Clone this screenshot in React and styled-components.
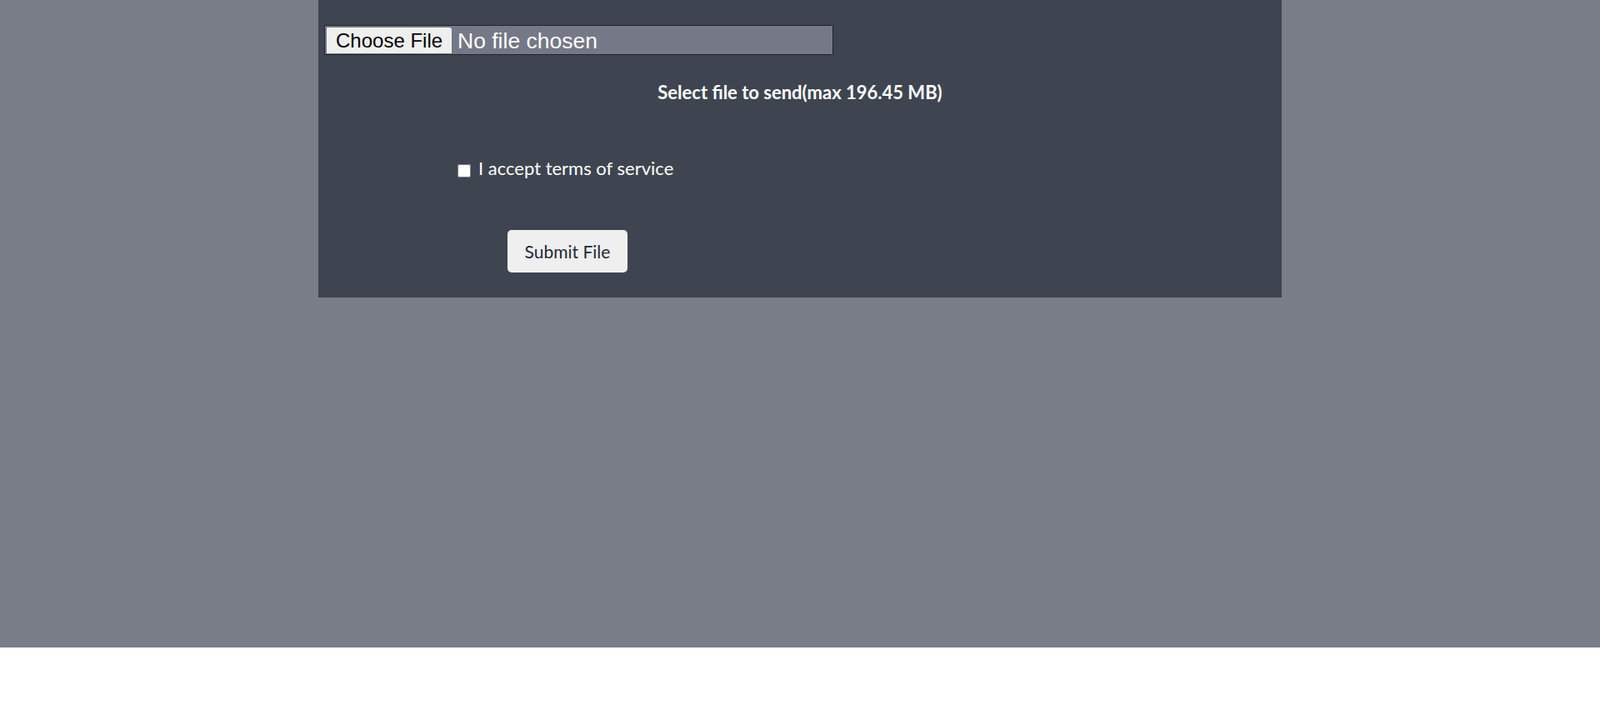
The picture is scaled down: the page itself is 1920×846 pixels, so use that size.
import React from 'react'
import styled, { createGlobalStyle } from 'styled-components'

const GlobalStyle = createGlobalStyle`
  body {
    margin: 0;
    background: #ffffff;
    font-family: Lato, "Noto Sans", sans-serif;
  }
`

const Page = styled.div`
  background-color: #797d88;
  height: 777px;
  display: flex;
  justify-content: center;
`

const Panel = styled.form`
  width: 1156px;
  height: 357px;
  box-sizing: border-box;
  background-color: #3e4550;
  padding: 30px 7px 0;
  display: flex;
  flex-direction: column;
`

const FileInput = styled.input`
  width: 611px;
  height: 36px;
  box-sizing: border-box;
  margin: 0;
  padding: 2px 2px 1px;
  background-color: #757886;
  border: 1px solid #1f232a;
  color: #ffffff;
  font-family: "Liberation Sans", Arial, sans-serif;
  font-size: 26.5px;
  line-height: 32px;
  &::file-selector-button {
    height: 31px;
    width: 150px;
    margin: 0 7px 0 0;
    padding: 0 11px;
    border: none;
    border-radius: 0 3px 0 0;
    background-color: #efefef;
    color: #000000;
    font-family: "Liberation Sans", Arial, sans-serif;
    font-size: 24px;
    vertical-align: top;
  }
`

const Title = styled.h3`
  margin: 32px 0 0;
  text-align: center;
  color: #ffffff;
  font-size: 22px;
  font-weight: 700;
  line-height: 26px;
`

const TermsRow = styled.label`
  margin: 66px 0 0 160px;
  align-self: flex-start;
  display: flex;
  align-items: center;
  gap: 9px;
  color: #ffffff;
  font-size: 22px;
  line-height: 24px;
`

const Check = styled.input`
  width: 16px;
  height: 16px;
  margin: 5px 0 0;
`

const SubmitButton = styled.button`
  margin: 62px 0 0 220px;
  align-self: flex-start;
  width: 144px;
  height: 51px;
  border: none;
  border-radius: 5px;
  background-color: #efefef;
  color: #222a38;
  font-family: Lato, "Noto Sans", sans-serif;
  font-size: 21px;
`

export default function App() {
  return (
    <>
      <GlobalStyle />
      <Page>
        <Panel onSubmit={(e) => e.preventDefault()}>
          <FileInput type="file" />
          <Title>Select file to send(max 196.45 MB)</Title>
          <TermsRow>
            <Check type="checkbox" />
            I accept terms of service
          </TermsRow>
          <SubmitButton type="submit">Submit File</SubmitButton>
        </Panel>
      </Page>
    </>
  )
}
